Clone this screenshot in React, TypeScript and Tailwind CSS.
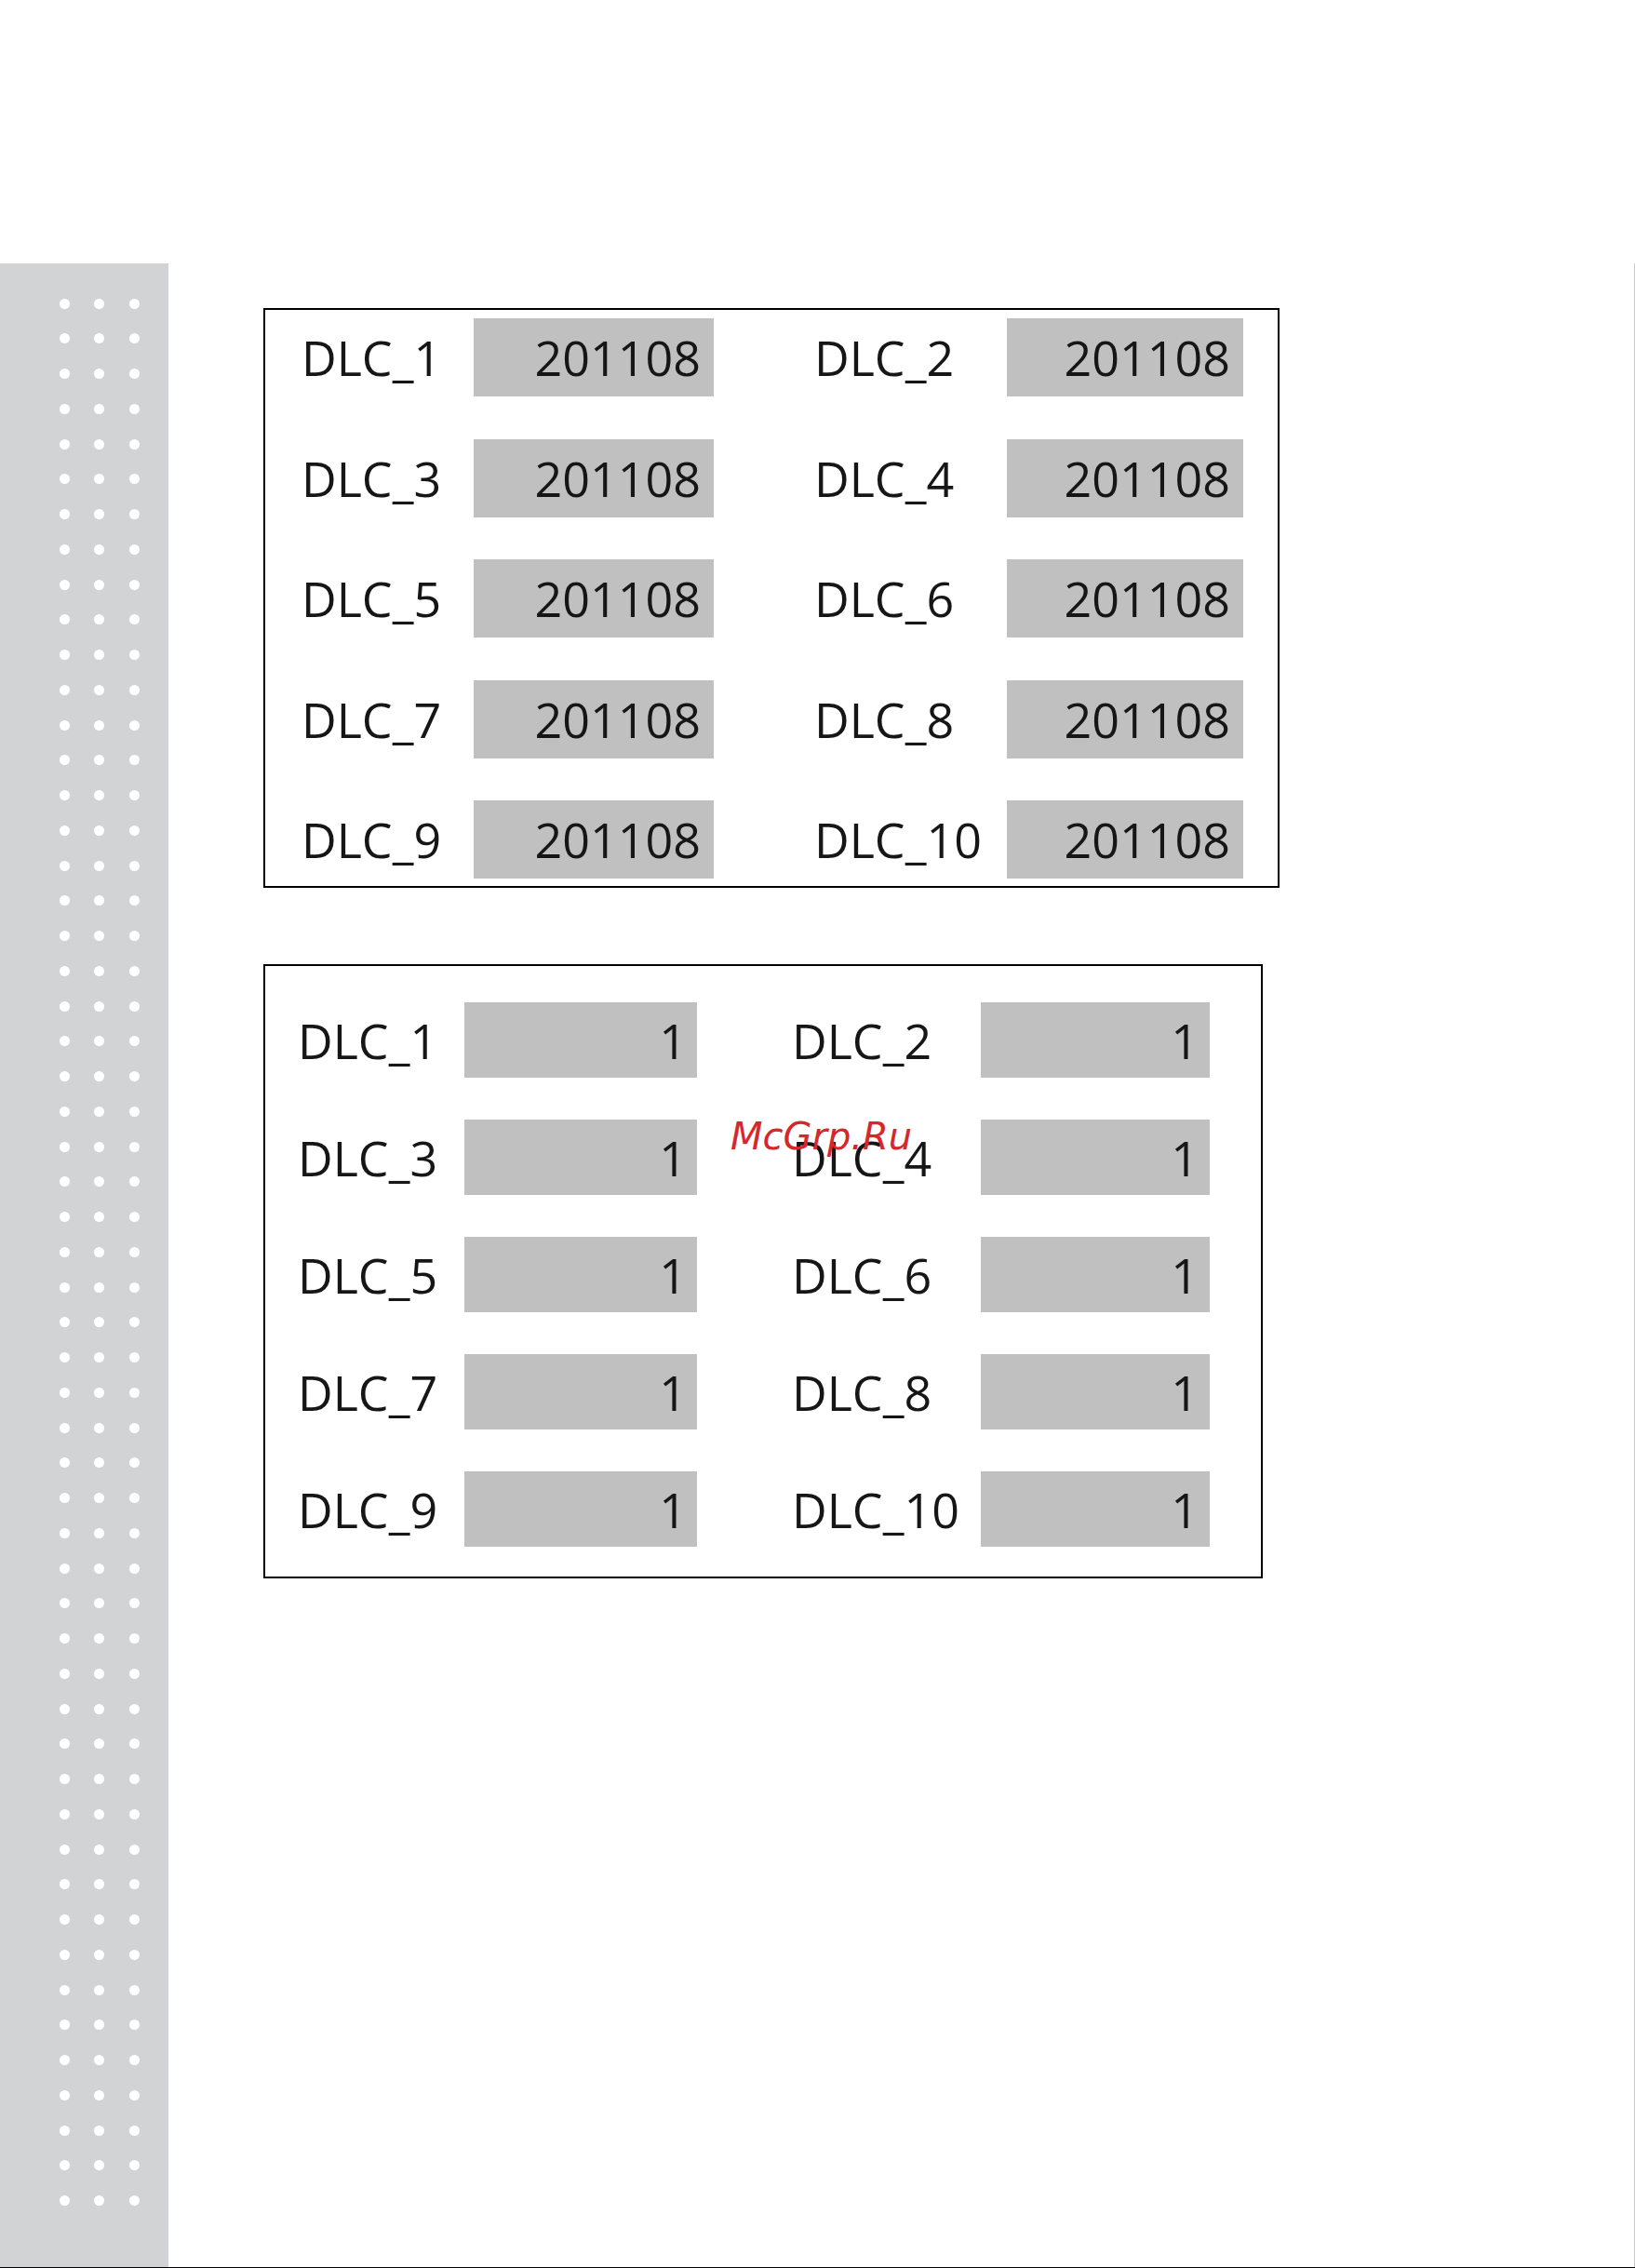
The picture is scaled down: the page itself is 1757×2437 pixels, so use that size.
const dateFields = Array.from({ length: 10 }, (_, i) => ({
  name: `DLC_${i + 1}`,
  value: "201108",
}));

const countFields = Array.from({ length: 10 }, (_, i) => ({
  name: `DLC_${i + 1}`,
  value: "1",
}));

const font = { fontFamily: '"Open Sans", "Noto Sans", sans-serif' };

type Field = { name: string; value: string };

function pairs(list: Field[]) {
  const rows: Field[][] = [];
  for (let i = 0; i < list.length; i += 2) rows.push([list[i], list[i + 1]]);
  return rows;
}

function DateTable() {
  return (
    <div className="w-[1092px] border-2 border-black pt-[9px] pb-[8px] flex flex-col gap-[45.5px]">
      {pairs(dateFields).map(([a, b]) => (
        <div key={a.name} className="flex items-center pl-[39px]">
          <span className="w-[185px] text-[52px] leading-none text-[#161616]">
            {a.name}
          </span>
          <div className="w-[258px] h-[84px] bg-[#c0c0c0] flex items-center justify-end pr-[14px] text-[52px] leading-none text-[#161616]">
            {a.value}
          </div>
          <span className="ml-[108px] w-[207px] text-[52px] leading-none text-[#161616]">
            {b.name}
          </span>
          <div className="w-[254px] h-[84px] bg-[#c0c0c0] flex items-center justify-end pr-[14px] text-[52px] leading-none text-[#161616]">
            {b.value}
          </div>
        </div>
      ))}
    </div>
  );
}

function CountTable() {
  return (
    <div className="w-[1074px] border-2 border-black pt-[39px] pb-[32px] flex flex-col gap-[45px]">
      {pairs(countFields).map(([a, b]) => (
        <div key={a.name} className="flex items-center pl-[35px]">
          <span className="w-[179px] text-[52px] leading-none text-[#161616]">
            {a.name}
          </span>
          <div className="w-[250px] h-[81px] bg-[#c0c0c0] flex items-center justify-end pr-[11px] text-[52px] leading-none text-[#161616]">
            {a.value}
          </div>
          <span className="ml-[102px] w-[203px] text-[52px] leading-none text-[#161616]">
            {b.name}
          </span>
          <div className="w-[246px] h-[81px] bg-[#c0c0c0] flex items-center justify-end pr-[12px] text-[52px] leading-none text-[#161616]">
            {b.value}
          </div>
        </div>
      ))}
    </div>
  );
}

export default function App() {
  return (
    <div className="relative w-[1757px] h-[2437px] bg-white flex flex-col" style={font}>
      <div className="h-[283px] shrink-0" />
      <div className="flex flex-1 border-r border-[#c8c8c8]">
        {/* dotted side strip */}
        <div className="w-[181px] shrink-0 bg-[#d1d3d4] pt-[37.5px] pl-[63.5px]">
          <div className="grid grid-cols-[11px_11px_11px] gap-x-[26.5px] gap-y-[26.76px]">
            {Array.from({ length: 165 }, (_, i) => (
              <span key={i} className="block w-[11px] h-[11px] rounded-full bg-white" />
            ))}
          </div>
        </div>
        <div className="pl-[102px] pt-[48px] flex flex-col gap-[82px]">
          <DateTable />
          <CountTable />
        </div>
      </div>
      <div className="h-px bg-black shrink-0" />

      <span
        className="absolute left-[785px] top-[1201px] text-[40px] leading-none italic text-[#d9262b]"
        style={{ fontFamily: '"DejaVu Sans", sans-serif' }}
      >
        McGrp.Ru
      </span>
    </div>
  );
}
